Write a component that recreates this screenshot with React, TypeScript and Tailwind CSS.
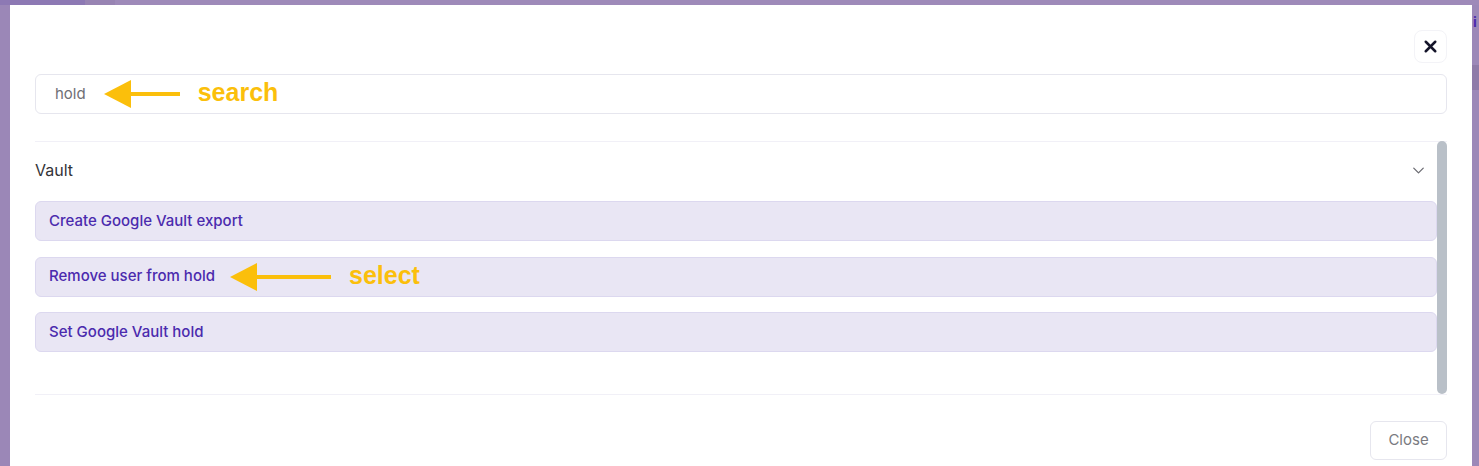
import { ChevronDown, X } from 'lucide-react';

const actions = ['Create Google Vault export', 'Remove user from hold', 'Set Google Vault hold'];

const Arrow = ({ length }: { length: number }) => (
  <svg width={length} height={30} viewBox={`0 0 ${length} 30`} className="shrink-0">
    <polygon points="0,15 27,1 27,29" fill="#fbbf0b" />
    <rect x={26} y={13} width={length - 26} height={4} fill="#fbbf0b" />
  </svg>
);

const Note = ({ children }: { children: string }) => (
  <span
    className="text-[25px] font-bold leading-none text-[#fbbf0b]"
    style={{ fontFamily: '"Liberation Sans", Arial, sans-serif' }}
  >
    {children}
  </span>
);

const App = () => {
  return (
    <div className="h-[466px] w-[1479px] overflow-hidden bg-[#9d89b9] flex flex-col" style={{ fontFamily: 'Inter, "Noto Sans", sans-serif' }}>
      <div className="flex h-[5px] shrink-0">
        <div className="w-[85px] bg-[#8d79b4]" />
        <div className="w-[30px] bg-[#9884b3]" />
        <div className="flex-1 bg-[#9e8ab9]" />
      </div>
      <div className="flex flex-1 min-h-0">
        <div className="w-[10px] shrink-0 bg-[#9b87b7]" />
        <div className="w-[1462px] shrink-0 bg-white px-[25px] pt-[25px]">
          <div className="flex justify-end">
            <button className="flex h-[33px] w-[33px] items-center justify-center rounded-lg border border-[#f3f3f7] text-[#15152a]">
              <X size={19} strokeWidth={3.2} />
            </button>
          </div>

          <div className="mt-[11px] flex h-[40px] items-center rounded-md border border-[#e6e6ee] pl-[19px]">
            <span className="text-[15px] text-[#6f6f75]">hold</span>
            <div className="ml-[18px] flex items-center">
              <Arrow length={76} />
            </div>
            <div className="ml-[18px] -mt-[1px]">
              <Note>search</Note>
            </div>
          </div>

          <div className="mt-[27px] flex h-[254px] border-t border-b border-[#f1f0f7]">
            <div className="flex-1">
              <div className="flex h-[38px] items-end justify-between pr-[9px]">
                <span className="text-[16px] leading-[20px] text-[#333338]">Vault</span>
                <ChevronDown size={19} strokeWidth={1.6} className="text-[#6b6b72]" />
              </div>
              <div className="mt-[21px] flex flex-col gap-[15.5px]">
                {actions.map((a, i) => (
                  <div
                    key={a}
                    className="flex h-[40px] items-center rounded-md border border-[#dcd8ef] bg-[#e9e6f4] pl-[13px]"
                  >
                    <span className="text-[15px] font-medium text-[#4b2bae]">{a}</span>
                    {i === 1 && (
                      <div className="ml-[15px] flex items-center">
                        <Arrow length={101} />
                        <div className="ml-[18px]">
                          <Note>select</Note>
                        </div>
                      </div>
                    )}
                  </div>
                ))}
              </div>
            </div>
            <div className="-mt-px w-[10px] rounded-full bg-[#b9c0c8]" />
          </div>

          <div className="mt-[26px] flex justify-end">
            <button className="h-[39px] w-[77px] rounded-md border border-[#e6e6ee] text-[15px] text-[#7a7a80]">
              Close
            </button>
          </div>
        </div>
        <div className="flex-1 bg-[#9c88b8] flex flex-col">
          <div className="h-[10px]" />
          <div className="h-[14px] pl-[1px] text-[14px] font-bold leading-[14px] text-[#4b2bae]">i</div>
          <div className="h-[36px]" />
          <div className="h-[25px] bg-[#8f7ba9]" />
        </div>
      </div>
    </div>
  );
};

export default App;
